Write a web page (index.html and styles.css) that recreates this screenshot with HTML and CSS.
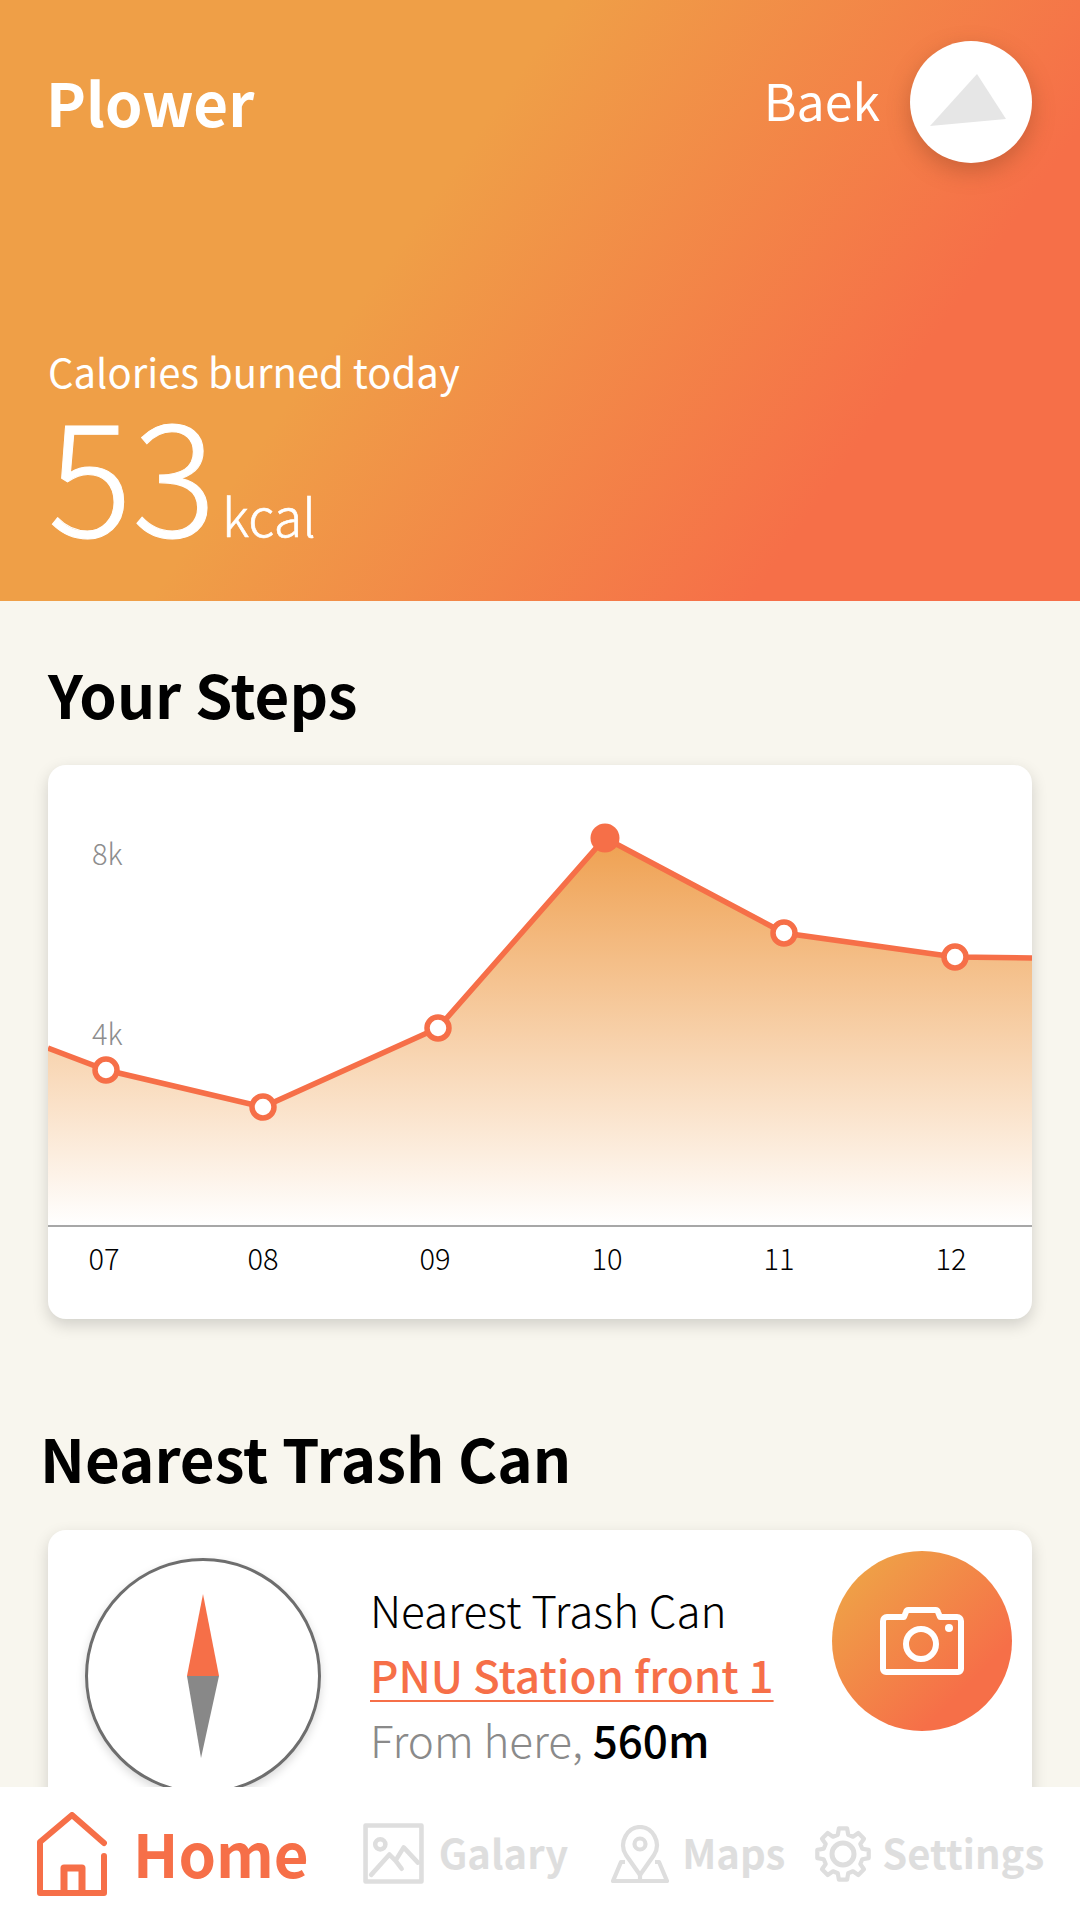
FILE: index.html
```html
<!DOCTYPE html>
<html lang="en">
<head>
<meta charset="utf-8">
<title>Plower</title>
<link rel="stylesheet" href="styles.css">
</head>
<body>
<div class="app">
  <header class="hero">
    <div class="hero-top">
      <div class="brand">Plower</div>
      <div class="user">
        <span class="user-name">Baek</span>
        <div class="avatar">
          <svg class="avatar-img" viewBox="0 0 122 122"><polygon points="67,33 96,78 20,85" fill="#e6e6e6"/></svg>
        </div>
      </div>
    </div>
    <div class="burn">
      <div class="burn-label">Calories burned today</div>
      <div class="burn-value"><span class="burn-num">53</span><span class="burn-unit">kcal</span></div>
    </div>
  </header>

  <main class="content">
    <h2 class="title steps-title">Your Steps</h2>
    <section class="card chart-card">
      <svg class="chart" viewBox="0 0 984 554">
        <defs>
          <linearGradient id="area" x1="0" y1="0" x2="0" y2="1">
            <stop offset="0" stop-color="#efa050"/>
            <stop offset="1" stop-color="#efa050" stop-opacity="0"/>
          </linearGradient>
        </defs>
        <text class="y-label" x="44" y="100">8k</text>
        <text class="y-label" x="44" y="280">4k</text>
        <polygon fill="url(#area)" points="0,283 58,305 215,342 390,263 557,73 736,168 907,192 984,193 984,461 0,461"/>
        <line class="axis" x1="0" y1="461" x2="984" y2="461"/>
        <polyline class="line" points="0,283 58,305 215,342 390,263 557,73 736,168 907,192 984,193"/>
        <circle class="dot" cx="58" cy="305" r="11"/>
        <circle class="dot" cx="215" cy="342" r="11"/>
        <circle class="dot" cx="390" cy="263" r="11"/>
        <circle class="dot-on" cx="557" cy="73" r="14.5"/>
        <circle class="dot" cx="736" cy="168" r="11"/>
        <circle class="dot" cx="907" cy="192" r="11"/>
        <text class="x-label" x="56" y="505">07</text>
        <text class="x-label" x="215" y="505">08</text>
        <text class="x-label" x="387" y="505">09</text>
        <text class="x-label" x="559" y="505">10</text>
        <text class="x-label" x="731" y="505">11</text>
        <text class="x-label" x="903" y="505">12</text>
      </svg>
    </section>

    <h2 class="title trash-title">Nearest Trash Can</h2>
    <section class="card trash-card">
      <div class="compass">
        <svg class="needle" viewBox="0 0 32 164">
          <polygon points="16,0 32,82 0,82" fill="#f66f48"/>
          <polygon points="0,82 32,82 14,164" fill="#888888"/>
        </svg>
      </div>
      <div class="trash-info">
        <div class="trash-line">Nearest Trash Can</div>
        <div class="trash-line trash-link">PNU Station front 1</div>
        <div class="trash-line trash-dist">From here, <b class="trash-m">560m</b></div>
      </div>
      <button class="cam-btn" type="button" aria-label="Camera">
        <svg class="cam-icon" viewBox="0 0 84 68" fill="none" stroke="#fff" stroke-width="6" stroke-linejoin="round">
          <path d="M3 62V14a4 4 0 0 1 4-4h17l2-5a3 3 0 0 1 3-2h26a3 3 0 0 1 3 2l2 5h17a4 4 0 0 1 4 4v48a3 3 0 0 1-3 3H6a3 3 0 0 1-3-3z"/>
          <circle cx="41" cy="37" r="15"/>
          <circle cx="69" cy="21" r="4" fill="#fff" stroke="none"/>
        </svg>
      </button>
    </section>
  </main>

  <nav class="nav">
    <a class="nav-item nav-home">
      <svg class="ico-home" viewBox="0 0 70 84" fill="none" stroke="#f66f48" stroke-width="6" stroke-linecap="round" stroke-linejoin="round">
        <path d="M67 31 35 3 3 30V81H67V44"/>
        <path d="M27 80V56H45V80" stroke-width="7"/>
      </svg>
      <span class="home-text">Home</span>
    </a>
    <a class="nav-item nav-gal">
      <svg class="ico ico-gal" viewBox="0 0 60 60" fill="none" stroke="#dedede" stroke-width="4.5" stroke-linecap="round" stroke-linejoin="round">
        <rect x="2.5" y="2.5" width="55" height="55"/>
        <circle cx="17" cy="21" r="5"/>
        <path d="M8 51 26 31 32 37 40 24 54 39M32 37 38 45"/>
      </svg>
      <span class="nav-text">Galary</span>
    </a>
    <a class="nav-item nav-maps">
      <svg class="ico" viewBox="0 0 58 58" fill="none" stroke="#dedede" stroke-width="4.2" stroke-linejoin="round">
        <path d="M29 50 15 30C7 17 17 2 29 2s22 15 14 28z"/>
        <circle cx="29" cy="19" r="5.5"/>
        <path d="M14 37H10L2 56H56L48 37H44M29 50v6"/>
      </svg>
      <span class="nav-text">Maps</span>
    </a>
    <a class="nav-item nav-set">
      <svg class="ico" viewBox="0 0 58 58" fill="none" stroke="#dedede" stroke-width="4.2" stroke-linejoin="round">
        <path d="M23.8 9.7 24.9 3.3H33.1L34.2 9.7 39 11.7 44.3 8 50 13.7 46.3 19 48.3 23.8 54.7 24.9V33.1L48.3 34.2 46.3 39 50 44.3 44.3 50 39 46.3 34.2 48.3 33.1 54.7H24.9L23.8 48.3 19 46.3 13.7 50 8 44.3 11.7 39 9.7 34.2 3.3 33.1V24.9L9.7 23.8 11.7 19 8 13.7 13.7 8 19 11.7z"/>
        <circle cx="29" cy="29" r="11" stroke-width="5"/>
      </svg>
      <span class="nav-text">Settings</span>
    </a>
  </nav>
</div>
</body>
</html>
```
FILE: styles.css
```css
* { box-sizing: border-box; }
html, body { margin: 0; padding: 0; }
body { font-family: "Noto Sans CJK KR", "Noto Sans", sans-serif; color: #000; background: #f8f6ee; }
.app { position: relative; width: 1080px; height: 1920px; overflow: hidden; background: #f8f6ee; }

.hero { height: 601px; padding: 41px 48px 0; color: #fff; display: flex; flex-direction: column; background: linear-gradient(125deg, #ef9f47 38%, #f66f48 78%); }
.hero-top { display: flex; justify-content: space-between; align-items: center; height: 122px; }
.brand { font-size: 60px; font-weight: 700; line-height: 1; margin: -3px 0 0 -2px; }
.user { display: flex; align-items: center; gap: 30px; }
.user-name { font-size: 50px; font-weight: 400; line-height: 1; margin-top: -6px; }
.avatar { width: 122px; height: 122px; border-radius: 50%; background: #fff; box-shadow: 0 8px 22px rgba(120, 60, 30, .35); }
.avatar-img { display: block; width: 122px; height: 122px; }
.burn { margin-top: 183px; }
.burn-label { font-size: 40px; font-weight: 400; line-height: 50px; }
.burn-value { display: flex; align-items: baseline; line-height: 1; margin-top: -2px; }
.burn-num { font-size: 157px; font-weight: 300; line-height: 150px; margin-left: 0; -webkit-text-stroke: 1px #fff; }
.burn-unit { font-size: 52px; font-weight: 300; margin-left: 6px; -webkit-text-stroke: .6px #fff; }

.content { padding: 0 48px; }
.title { margin: 0; font-size: 60px; font-weight: 700; line-height: 80px; }
.steps-title { padding-top: 52px; }
.trash-title { margin-top: 98px; margin-left: -8px; }
.card { background: #fff; border-radius: 18px; box-shadow: 0 6px 16px rgba(0, 0, 0, .16); }
.chart-card { margin-top: 32px; height: 554px; overflow: hidden; }
.chart { display: block; width: 984px; height: 554px; }
.y-label { font-size: 29px; font-weight: 300; fill: #8d8d8d; }
.x-label { font-size: 29px; font-weight: 300; fill: #000; text-anchor: middle; }
.axis { stroke: #8a8a8a; stroke-width: 1.5; }
.line { fill: none; stroke: #f66f48; stroke-width: 5.5; }
.dot { fill: #fff; stroke: #f66f48; stroke-width: 5.5; }
.dot-on { fill: #f66f48; }

.trash-card { margin-top: 33px; height: 320px; display: flex; align-items: flex-start; }
.compass { flex: none; width: 236px; height: 236px; margin: 28px 0 0 37px; border: 3px solid #6e6e6e; border-radius: 50%; display: flex; align-items: center; justify-content: center; box-shadow: 0 4px 10px rgba(0, 0, 0, .15); }
.needle { display: block; width: 32px; height: 164px; }
.trash-info { flex: none; width: 376px; margin: 47px 0 0 49px; }
.trash-line { font-size: 44px; font-weight: 300; line-height: 65px; white-space: nowrap; }
.trash-link { color: #f66f48; font-weight: 500; text-decoration: underline; text-decoration-thickness: 2px; text-underline-offset: 7px; }
.trash-dist { color: #8a8a8a; }
.trash-m { color: #000; font-weight: 500; }
.cam-btn { flex: none; width: 180px; height: 180px; margin: 21px 0 0 86px; padding: 0; border: 0; border-radius: 50%; display: flex; align-items: center; justify-content: center; background: linear-gradient(135deg, #ef9f47 15%, #f66f48 75%); }
.cam-icon { display: block; width: 84px; height: 68px; }

.nav { position: absolute; left: 0; right: 0; bottom: 0; height: 133px; background: #fff; display: flex; align-items: center; padding-left: 37px; }
.nav-item { display: flex; align-items: center; flex: none; }
.ico-home { display: block; width: 70px; height: 84px; margin-right: 26px; }
.home-text { color: #f66f48; font-size: 60px; font-weight: 700; line-height: 1; margin-top: -4px; }
.ico { display: block; width: 58px; height: 58px; margin-right: 13px; }
.ico-gal { width: 61px; height: 61px; margin-right: 15px; }
.nav-text { color: #dedede; font-size: 40px; font-weight: 700; line-height: 1; margin-top: -3px; }
.nav-gal { margin-left: 54px; }
.nav-maps { margin-left: 43px; }
.nav-set { margin-left: 29px; }
.nav-set .ico { margin-right: 10px; }
```
